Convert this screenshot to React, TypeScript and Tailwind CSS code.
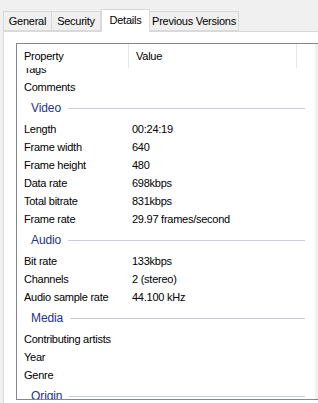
import React from "react";

type Row = { label: string; value?: string };
type Section = { kind: "group"; title: string } | ({ kind: "row" } & Row);

const items: Section[] = [
  { kind: "row", label: "Comments" },
  { kind: "group", title: "Video" },
  { kind: "row", label: "Length", value: "00:24:19" },
  { kind: "row", label: "Frame width", value: "640" },
  { kind: "row", label: "Frame height", value: "480" },
  { kind: "row", label: "Data rate", value: "698kbps" },
  { kind: "row", label: "Total bitrate", value: "831kbps" },
  { kind: "row", label: "Frame rate", value: "29.97 frames/second" },
  { kind: "group", title: "Audio" },
  { kind: "row", label: "Bit rate", value: "133kbps" },
  { kind: "row", label: "Channels", value: "2 (stereo)" },
  { kind: "row", label: "Audio sample rate", value: "44.100 kHz" },
  { kind: "group", title: "Media" },
  { kind: "row", label: "Contributing artists" },
  { kind: "row", label: "Year" },
  { kind: "row", label: "Genre" },
  { kind: "group", title: "Origin" },
];

function ItemRow({ label, value }: Row) {
  return (
    <div className="flex h-[18px] items-center shrink-0">
      <div className="w-[115px] pl-[7px] truncate">{label}</div>
      <div className="flex-1">{value ?? ""}</div>
    </div>
  );
}

function Group({ title }: { title: string }) {
  return (
    <div className="flex h-[24px] items-center shrink-0 pl-[14px] pr-[10px]">
      <span className="text-[#1e3287] text-[12px] tracking-[-0.1px]">{title}</span>
      <div className="ml-[7px] flex-1 h-px bg-[#c9ced6]" />
    </div>
  );
}

function Tab({ label, w, selected }: { label: string; w: string; selected?: boolean }) {
  if (selected) {
    return (
      <div
        className={`${w} h-[23px] -mb-px relative z-10 bg-white border border-b-0 border-[#d9d9d9] flex items-center justify-center pb-[2px]`}
      >
        {label}
      </div>
    );
  }
  return (
    <div
      className={`${w} h-[20px] bg-[#f0f0f0] border border-[#d9d9d9] -ml-px first:ml-0 flex items-center justify-center`}
    >
      {label}
    </div>
  );
}

export default function App() {
  return (
    <div
      className="w-[318px] h-[403px] overflow-hidden bg-[#f0f0f0] text-black text-[11px] tracking-[-0.25px] flex flex-col"
      style={{ fontFamily: '"Liberation Sans", Arial, sans-serif' }}
    >
      <div className="flex items-end h-[31px] pl-[3px] shrink-0">
        <Tab label="General" w="w-[49px]" />
        <Tab label="Security" w="w-[50px]" />
        <Tab label="Details" w="w-[49px]" selected />
        <Tab label="Previous Versions" w="w-[90px]" />
      </div>
      <div className="ml-[3px] flex-1 bg-white border-l border-t border-[#d9d9d9] pl-[12px] pt-[11px] min-h-0">
        <div className="w-[320px] h-[357px] border border-[#828790] flex overflow-hidden">
          <div className="w-[298px] flex flex-col min-h-0">
            <div className="flex h-[24px] shrink-0 relative z-10 bg-white">
              <div className="w-[112px] pl-[7px] flex items-center border-r border-[#e5e5e5]">Property</div>
              <div className="w-[168px] pl-[7px] flex items-center border-r border-[#e5e5e5]">Value</div>
              <div className="flex-1" />
            </div>
            <div className="flex-1 flex flex-col overflow-hidden min-h-0">
              <div className="-mt-[8px]">
                <ItemRow label="Tags" />
              </div>
              {items.map((it, i) =>
                it.kind === "group" ? (
                  <Group key={i} title={it.title} />
                ) : (
                  <ItemRow key={i} label={it.label} value={it.value} />
                )
              )}
            </div>
          </div>
          <div className="w-[17px] bg-[#f0f0f0] flex justify-center pt-[44px] shrink-0">
            <div className="w-[8px] h-[96px] bg-[#cdcdcd]" />
          </div>
        </div>
      </div>
    </div>
  );
}
